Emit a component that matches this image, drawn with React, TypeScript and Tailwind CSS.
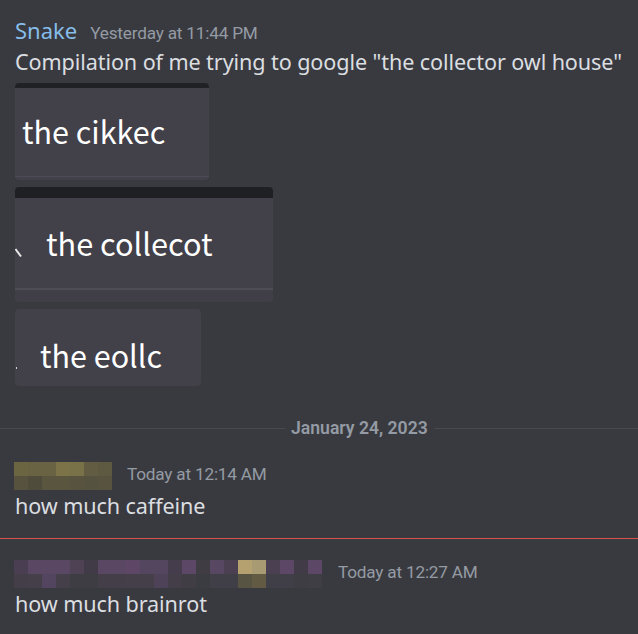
import React from "react";

const firstName: string[][] = [
  ["bg-[#6b6542]", "bg-[#696343]", "bg-[#696343]", "bg-[#7c7448]", "bg-[#797249]", "bg-[#615c42]", "bg-[#5e5a41]"],
  ["bg-[#56523e]", "bg-[#4f4c3c]", "bg-[#59553f]", "bg-[#59553f]", "bg-[#57533f]", "bg-[#55523f]", "bg-[#57533f]"],
];

const secondName: string[][] = [
  [
    "bg-[#4a3f52]", "bg-[#5a4763]", "bg-[#5a4763]", "bg-[#5a4763]", "bg-[#4e4254]", "bg-[#413b47]",
    "bg-[#5a4763]", "bg-[#5a4763]", "bg-[#5e4666]", "bg-[#554660]", "bg-[#554660]", "bg-[#453d4c]",
    "bg-[#5c4866]", "bg-[#3f3c44]", "bg-[#574762]", "bg-[#4b3f52]", "bg-[#b5a070]", "bg-[#a89a72]",
    "bg-[#4b3f52]", "bg-[#5c4866]", "bg-[#413b47]", "bg-[#5c4866]",
  ],
  [
    "bg-[#433e48]", "bg-[#453f4a]", "bg-[#534560]", "bg-[#453f4a]", "bg-[#3e3d43]", "bg-[#3e3d43]",
    "bg-[#433e48]", "bg-[#433e48]", "bg-[#453f4a]", "bg-[#453f4a]", "bg-[#4d4257]", "bg-[#433e48]",
    "bg-[#403d45]", "bg-[#3b3c41]", "bg-[#403e46]", "bg-[#403e46]", "bg-[#575444]", "bg-[#635a44]",
    "bg-[#403e46]", "bg-[#403e46]", "bg-[#3d3d43]", "bg-[#3e3e44]",
  ],
];

// censored username, drawn as a grid of 14px blocks
const PixelName = ({ rows }: { rows: string[][] }) => (
  <div className="flex flex-col">
    {rows.map((row, i) => (
      <div key={i} className="flex">
        {row.map((cls, j) => (
          <div key={j} className={`w-[14px] h-[14px] ${cls}`} />
        ))}
      </div>
    ))}
  </div>
);

const Timestamp = ({ children }: { children: React.ReactNode }) => (
  <span className="text-[17.2px] text-[#949ba4] tracking-[-0.2px] font-['Roboto',sans-serif]">
    {children}
  </span>
);

const imageFont = "font-['Noto_Sans_CJK_KR','Noto_Sans',sans-serif]";

export default function App() {
  return (
    <div className="w-[638px] h-[634px] bg-[#393a3f] overflow-hidden font-['Noto_Sans',sans-serif] text-[#dbdee1]">
      {/* Snake's message */}
      <div className="pl-[15px] pt-[14px]">
        <div className="flex items-baseline gap-[13px] h-[32px]">
          <span className="text-[22px] text-[#86bde9]">Snake</span>
          <Timestamp>Yesterday at 11:44 PM</Timestamp>
        </div>
        <div className="text-[21.6px] leading-[32px] tracking-[-0.1px]">
          Compilation of me trying to google "the collector owl house"
        </div>

        <div className="flex flex-col items-start gap-[7px] mt-[5px]">
          {/* first screenshot */}
          <div className="w-[194px] h-[97px] rounded-[4px] overflow-hidden bg-[#424049] flex flex-col">
            <div className="h-[5px] bg-[#202125]" />
            <div className={`flex-1 flex items-center pl-[7px] pb-[1px] text-[30.5px] text-white ${imageFont}`}>
              the cikkec
            </div>
            <div className="h-[1px] bg-[#4d4c55]" />
            <div className="h-[3px]" />
          </div>

          {/* second screenshot */}
          <div className="w-[258px] h-[115px] rounded-[4px] overflow-hidden bg-[#424049] flex flex-col">
            <div className="h-[11px] bg-[#1f2024]" />
            <div className={`relative flex-1 flex items-center pl-[31px] text-[30.7px] text-white ${imageFont}`}>
              <svg className="absolute left-0 top-[50px]" width="8" height="12" viewBox="0 0 8 12">
                <path d="M0.5 1 L6 8.5" stroke="#e8e8e8" strokeWidth="2" />
              </svg>
              the collecot
            </div>
            <div className="h-[2px] bg-[#4e4d56]" />
            <div className="h-[12px] bg-[#403f48]" />
          </div>

          {/* third screenshot */}
          <div className={`relative w-[186px] h-[77px] rounded-[4px] bg-[#424049] flex items-center pl-[25px] pt-[17px] text-[30.5px] text-white ${imageFont}`}>
            <div className="absolute left-[1px] top-[58px] w-[1px] h-[2px] bg-[#cfcfcf]" />
            the eollc
          </div>
        </div>
      </div>

      {/* date divider */}
      <div className="flex items-center mt-[32px] h-[20px]">
        <div className="w-[285px] h-[1px] bg-[#47494f]" />
        <span className="px-[6px] text-[17.6px] font-semibold text-[#949ba4] font-['Roboto',sans-serif]">
          January 24, 2023
        </span>
        <div className="flex-1 h-[1px] bg-[#47494f]" />
      </div>

      {/* caffeine message */}
      <div className="pl-[14px] pt-[24px]">
        <div className="flex items-center gap-[15px] h-[28px]">
          <PixelName rows={firstName} />
          <div className="leading-[24px] mb-[4px]">
            <Timestamp>Today at 12:14 AM</Timestamp>
          </div>
        </div>
        <div className="pl-[1px] text-[21.6px] leading-[30px] mt-[1px] tracking-[-0.1px]">how much caffeine</div>
      </div>

      {/* new messages line */}
      <div className="mt-[17px] h-[1px] bg-[#d9504c]" />

      {/* brainrot message */}
      <div className="pl-[14px] pt-[21px]">
        <div className="flex items-center gap-[16px] h-[28px]">
          <PixelName rows={secondName} />
          <div className="leading-[22px] mb-[5px]">
            <Timestamp>Today at 12:27 AM</Timestamp>
          </div>
        </div>
        <div className="pl-[1px] text-[21.6px] leading-[30px] mt-[1px] tracking-[-0.1px]">how much brainrot</div>
      </div>
    </div>
  );
}
